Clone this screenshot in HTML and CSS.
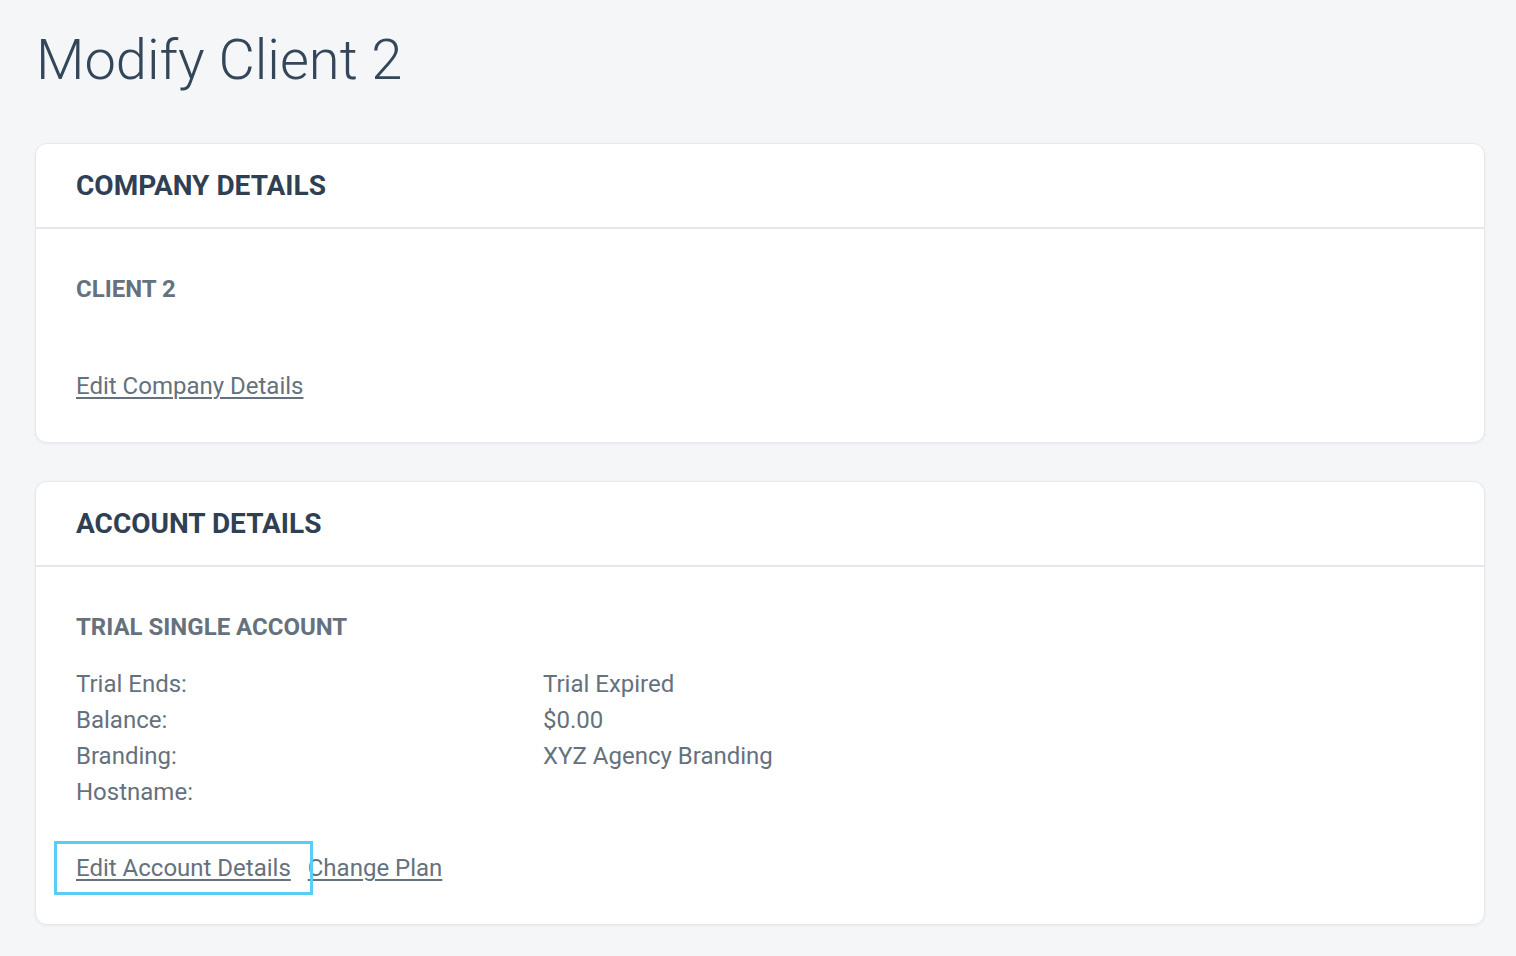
FILE: index.html
```html
<!DOCTYPE html>
<html>
<head>
<meta charset="utf-8">
<link rel="stylesheet" href="styles.css">
</head>
<body>
<main class="page">
  <h1 class="title">Modify Client 2</h1>

  <section class="card">
    <header class="card-header"><h2>COMPANY DETAILS</h2></header>
    <div class="card-body">
      <h3 class="subhead">CLIENT 2</h3>
      <div class="actions actions-company">
        <a href="#" class="link">Edit Company Details</a>
      </div>
    </div>
  </section>

  <section class="card">
    <header class="card-header"><h2>ACCOUNT DETAILS</h2></header>
    <div class="card-body">
      <h3 class="subhead">TRIAL SINGLE ACCOUNT</h3>
      <dl class="details">
        <dt>Trial Ends:</dt><dd>Trial Expired</dd>
        <dt>Balance:</dt><dd>$0.00</dd>
        <dt>Branding:</dt><dd>XYZ Agency Branding</dd>
        <dt>Hostname:</dt><dd></dd>
      </dl>
      <div class="actions">
        <a href="#" class="link focused">Edit Account Details</a>
        <a href="#" class="link">Change Plan</a>
      </div>
    </div>
  </section>
</main>
</body>
</html>
```

FILE: styles.css
```css
html, body {
  margin: 0;
  padding: 0;
  background: #f5f6f8;
  font-family: Roboto, "Liberation Sans", sans-serif;
  color: #66717e;
}

.page {
  padding: 0 31px 32px 35px;
}

.title {
  margin: 27px 0 49px 1px;
  font-size: 56px;
  line-height: 67px;
  font-weight: 300;
  color: #34465a;
}

.card {
  background: #ffffff;
  border: 1px solid #e6e8ec;
  border-radius: 12px;
  box-shadow: 0 1px 3px rgba(30, 40, 60, 0.06);
  margin-bottom: 38px;
}

.card-header {
  padding: 24px 40px 23px 40px;
  border-bottom: 2px solid #e5e7eb;
}

.card-header h2 {
  margin: 0;
  font-size: 28px;
  line-height: 36px;
  font-weight: 700;
  color: #2f4054;
}

.card-body {
  padding: 40px 40px 38px 40px;
}

.subhead {
  margin: 0;
  font-size: 24px;
  line-height: 40px;
  font-weight: 700;
  color: #66717e;
}

.details {
  display: grid;
  grid-template-columns: 467px 1fr;
  margin: 19px 0 0 0;
  font-size: 24px;
  line-height: 36px;
}

.details dt, .details dd {
  margin: 0;
  min-height: 36px;
}

.actions {
  margin-top: 40px;
  font-size: 24px;
  line-height: 36px;
}

.actions-company {
  margin-top: 59px;
}

.link {
  color: #66717e;
  text-decoration: underline;
  text-underline-offset: 3px;
  text-decoration-thickness: 2px;
  margin-right: 11px;
}

.focused {
  position: relative;
}

.focused::after {
  content: "";
  position: absolute;
  left: -22px;
  right: -22px;
  top: -13px;
  bottom: -13px;
  border: 3px solid #5acdf6;
  pointer-events: none;
}
```
